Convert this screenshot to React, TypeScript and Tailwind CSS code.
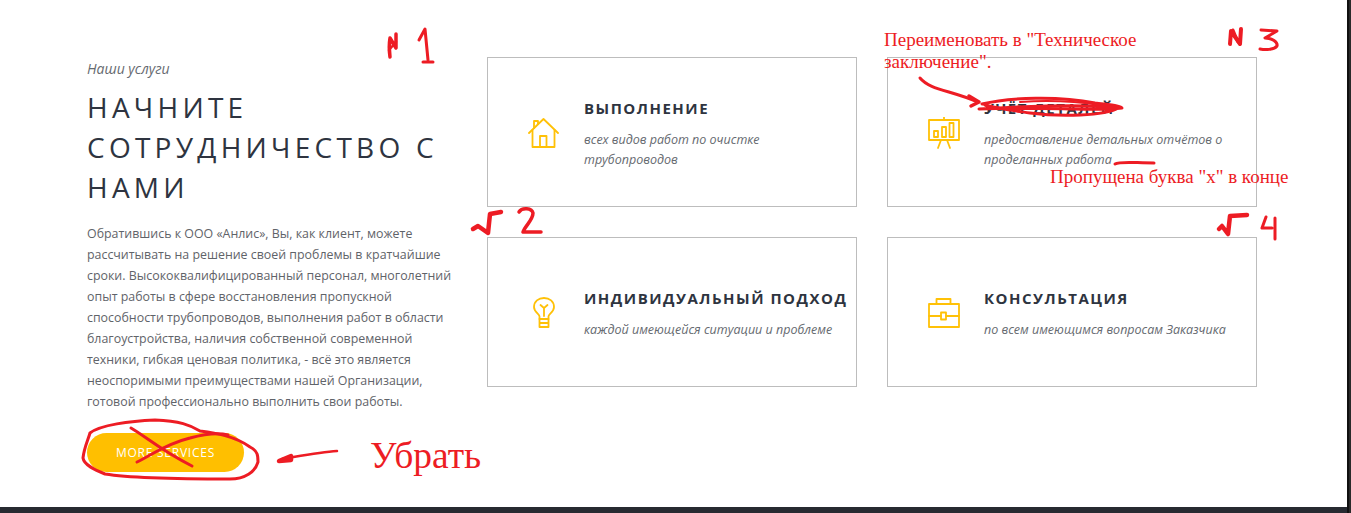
const Y = "#ffc107";

function HomeIcon() {
  return (
    <svg width="32" height="32" viewBox="0 0 32 32" fill="none" stroke={Y} strokeWidth="1.8" strokeLinejoin="round" strokeLinecap="round">
      <path d="M1 16 L15.5 2 L30 16" />
      <path d="M4.5 13 V30 H26.5 V13" />
      <path d="M12 30 V19 H18.5 V30" />
      <path d="M6 11 V4 H10 V7" />
    </svg>
  );
}
function BoardIcon() {
  return (
    <svg width="32" height="32" viewBox="0 0 32 32" fill="none" stroke={Y} strokeWidth="1.8" strokeLinejoin="round" strokeLinecap="round">
      <path d="M1 3 H31 V23 H1 Z" />
      <path d="M16 0 V3" />
      <path d="M13 23 L10 31 M19 23 L22 31" />
      <rect x="6" y="14" width="4" height="6" />
      <rect x="14" y="10" width="4" height="10" />
      <rect x="21.5" y="6" width="4" height="14" />
    </svg>
  );
}
function BulbIcon() {
  return (
    <svg width="22" height="31" viewBox="0 0 22 31" fill="none" stroke={Y} strokeWidth="1.8" strokeLinejoin="round" strokeLinecap="round">
      <path d="M6.5 22 V19.5 C6.5 17 1 15 1 10 C1 4.5 5.5 1 11 1 C16.5 1 21 4.5 21 10 C21 15 15.5 17 15.5 19.5 V22 Z" />
      <path d="M11 19 V11 M7.5 8 L11 11 L14.5 8" />
      <path d="M6.5 22 H15.5 V30 H6.5 Z M6.5 26 H15.5" />
    </svg>
  );
}
function CaseIcon() {
  return (
    <svg width="32" height="30" viewBox="0 0 32 30" fill="none" stroke={Y} strokeWidth="1.8" strokeLinejoin="round" strokeLinecap="round">
      <path d="M1 6 H31 V29 H1 Z" />
      <path d="M8.5 6 V1 H22.5 V6" />
      <path d="M1 18 H13 M18 18 H31" />
      <rect x="13" y="14.5" width="5" height="7" />
    </svg>
  );
}

function Card({ icon, title, desc }: { icon: React.ReactNode; title: string; desc: React.ReactNode }) {
  return (
    <div className="flex h-[150px] w-[370px] items-center border border-[#bdbdbd]">
      <div className="flex w-[96px] shrink-0 justify-center pt-[1px] pl-[16px]">{icon}</div>
      <div className="min-w-0 pt-[2px]">
        <h3 className="whitespace-nowrap text-[15px] leading-[22px] font-bold tracking-[1.5px] text-[#2e3440]">{title}</h3>
        <p className="mt-[11px] text-[12.5px] leading-[20px] text-[#666a70] italic">{desc}</p>
      </div>
    </div>
  );
}

function Scribbles() {
  const s = { fill: "none", stroke: "#ed1c24", strokeLinecap: "round", strokeLinejoin: "round" } as const;
  return (
    <svg className="pointer-events-none absolute top-0 left-0" width="1351" height="513" viewBox="0 0 1351 513">
      {/* N 1 */}
      <path {...s} strokeWidth="3.5" d="M390 57 C389 50 389 44 390 38 L396 48 L396 34" />
      <path {...s} strokeWidth="2.5" d="M389 50 L396 42" />
      <path {...s} strokeWidth="3" d="M419 40 L425 29 L428 60" />
      <path {...s} strokeWidth="3" d="M423 62 H433" />
      {/* N 2 */}
      <path {...s} strokeWidth="4.5" d="M473 229 L478 226 L488 233 L490 214 L501 212" />
      <path {...s} strokeWidth="3.5" d="M519 212 C522 207 532 208 533 213 C533 220 525 226 523 232 H541" />
      {/* N 3 */}
      <path {...s} strokeWidth="4" d="M1230 44 L1231 31 L1240 44 L1241 29" />
      <path {...s} strokeWidth="3" d="M1233 30 L1238 42" />
      <path {...s} strokeWidth="3" d="M1261 30 L1277 31 L1265 38 C1272 38 1278 42 1277 46 C1274 50 1265 50 1260 49" />
      {/* N 4 */}
      <path {...s} strokeWidth="4.5" d="M1219 229 L1222 226 L1228 234 L1230 216 L1247 215" />
      <path {...s} strokeWidth="3" d="M1266 217 L1262 228 H1272 M1275 218 V239" />
      {/* arrow to title */}
      <path {...s} strokeWidth="3" d="M920 78 C930 90 950 90 978 102" />
      <path {...s} strokeWidth="3.5" d="M969 96 L979 102 L971 106" />
      {/* title scratch */}
      <path {...s} strokeWidth="3" d="M982 104 C1010 97 1060 96 1095 103 C1110 105 1122 106 1122 108 C1095 112 1040 106 979 109 C1030 106 1090 104 1118 108 C1105 116 1060 117 1030 113 C1010 110 995 108 985 105" />
      <path {...s} strokeWidth="2" d="M1020 102 C1050 100 1080 102 1100 105" />
      {/* missing letter */}
      <path {...s} strokeWidth="3" d="M1115 164 C1120 161 1135 163 1154 163" />
      {/* button circle */}
      <path {...s} strokeWidth="3" d="M90 433 C100 425 130 421 155 420 C180 421 190 425 200 431 C215 433 235 436 250 447 C258 451 258 456 258 462 C255 472 245 479 230 479 C190 479 130 478 105 474 C95 470 84 465 83 458 C84 448 88 440 90 433" />
      {/* cross */}
      <path {...s} strokeWidth="3" d="M131 428 C145 436 160 450 192 466" />
      <path {...s} strokeWidth="3" d="M137 462 C150 456 165 444 190 438 C205 434 220 433 228 435" />
      {/* arrow left */}
      <path {...s} strokeWidth="2.5" d="M337 451 C320 452 300 456 282 459" />
      <path {...s} strokeWidth="4.5" d="M279 461 L291 456 L291 460 Z" />
    </svg>
  );
}

export default function App() {
  return (
    <div className="relative h-[513px] w-[1351px] overflow-hidden bg-white font-['Open_Sans',sans-serif]">
      <div className="flex h-[507px] w-[1347px] gap-[38px] pl-[87px]">
        <div className="w-[362px] shrink-0 pt-[59px]">
          <p className="text-[14px] leading-[20px] text-[#666a70] italic">Наши услуги</p>
          <h2 className="mt-[8px] text-[28px] leading-[40px] font-normal tracking-[4.25px] whitespace-nowrap text-[#2e3440]">
            НАЧНИТЕ<br />СОТРУДНИЧЕСТВО С<br />НАМИ
          </h2>
          <p className="mt-[16px] w-[370px] text-[12.4px] leading-[21px] text-[#5f6369]">
            Обратившись к ООО «Анлис», Вы, как клиент, можете<br />
            рассчитывать на решение своей проблемы в кратчайшие<br />
            сроки. Высококвалифицированный персонал, многолетний<br />
            опыт работы в сфере восстановления пропускной<br />
            способности трубопроводов, выполнения работ в области<br />
            благоустройства, наличия собственной современной<br />
            техники, гибкая ценовая политика, - всё это является<br />
            неоспоримыми преимуществами нашей Организации,<br />
            готовой профессионально выполнить свои работы.
          </p>
          <button className="mt-[21px] flex h-[39px] w-[157px] items-center justify-center rounded-full bg-[#ffbf00] pt-[1px] text-[12px] tracking-[0.75px] text-white">
            MORE SERVICES
          </button>
        </div>
        <div className="grid grid-cols-[370px_370px] content-start gap-[30px] pt-[57px]">
          <Card icon={<HomeIcon />} title="ВЫПОЛНЕНИЕ" desc={<>всех видов работ по очистке<br />трубопроводов</>} />
          <Card icon={<BoardIcon />} title="УЧЁТ ДЕТАЛЕЙ" desc={<>предоставление детальных отчётов о<br />проделанных работа</>} />
          <Card icon={<BulbIcon />} title="ИНДИВИДУАЛЬНЫЙ ПОДХОД" desc="каждой имеющейся ситуации и проблеме" />
          <Card icon={<CaseIcon />} title="КОНСУЛЬТАЦИЯ" desc="по всем имеющимся вопросам Заказчика" />
        </div>
      </div>
      <div className="h-[6px] w-[1347px] bg-[#272a31]" />
      <div className="absolute top-0 right-0 flex h-full w-[4px]">
        <div className="w-[2px] bg-[#111111]" />
        <div className="w-[2px] bg-[#2a2a2a]" />
      </div>
      <Scribbles />
      <div className="absolute top-[29px] left-[884px] w-[290px] font-['Liberation_Serif',serif] text-[19px] leading-[22px] text-[#ed1c24]">
        Переименовать в "Техническое заключение".
      </div>
      <div className="absolute top-[166px] left-[1050px] font-['Liberation_Serif',serif] text-[19px] leading-[22px] whitespace-nowrap text-[#ed1c24]">
        Пропущена буква "х" в конце
      </div>
      <div className="absolute top-[434px] left-[370px] font-['Liberation_Serif',serif] text-[37.5px] leading-[44px] text-[#ed1c24]">
        Убрать
      </div>
    </div>
  );
}
